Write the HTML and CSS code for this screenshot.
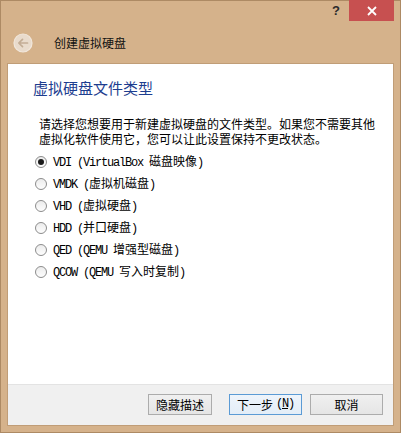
FILE: index.html
```html
<!DOCTYPE html>
<html lang="zh-CN">
<head>
<meta charset="utf-8">
<title>创建虚拟硬盘</title>
<link rel="stylesheet" href="styles.css">
</head>
<body>
<div class="window">
  <div class="titlebar">
    <div class="help">?</div>
    <div class="close">
      <svg width="10" height="10" viewBox="0 0 10 10"><path d="M1 1 L9 9 M9 1 L1 9" stroke="#fff" stroke-width="1.8" fill="none"/></svg>
    </div>
  </div>
  <div class="nav">
    <svg class="back" width="20" height="20" viewBox="0 0 20 20">
      <circle cx="10" cy="10" r="9" fill="#e9dbcc" stroke="#f1e7dc" stroke-width="1.2"/>
      <path d="M14.5 10 H6 M9.5 6.3 L5.8 10 L9.5 13.7" stroke="#c3ad95" stroke-width="1.7" fill="none" stroke-linecap="round" stroke-linejoin="round"/>
    </svg>
    <span class="nav-title">创建虚拟硬盘</span>
  </div>
  <div class="client">
    <div class="page">
      <h1 class="heading">虚拟硬盘文件类型</h1>
      <p class="desc">请选择您想要用于新建虚拟硬盘的文件类型。如果您不需要其他<br>虚拟化软件使用它，您可以让此设置保持不更改状态。</p>
      <div class="options">
        <div class="option"><span class="radio checked"></span><span class="label"><span class="mono">VDI (VirtualBox </span>磁盘映像<span class="mono">)</span></span></div>
        <div class="option"><span class="radio"></span><span class="label"><span class="mono">VMDK (</span>虚拟机磁盘<span class="mono">)</span></span></div>
        <div class="option"><span class="radio"></span><span class="label"><span class="mono">VHD (</span>虚拟硬盘<span class="mono">)</span></span></div>
        <div class="option"><span class="radio"></span><span class="label"><span class="mono">HDD (</span>并口硬盘<span class="mono">)</span></span></div>
        <div class="option"><span class="radio"></span><span class="label"><span class="mono">QED (QEMU </span>增强型磁盘<span class="mono">)</span></span></div>
        <div class="option"><span class="radio"></span><span class="label"><span class="mono">QCOW (QEMU </span>写入时复制<span class="mono">)</span></span></div>
      </div>
    </div>
    <div class="footer">
      <button class="btn btn-hide">隐藏描述</button>
      <button class="btn btn-next focused">下一步<span class="mono">(<u>N</u>)</span></button>
      <button class="btn btn-cancel">取消</button>
    </div>
  </div>
</div>
</body>
</html>
```

FILE: styles.css
```css
html, body {
  margin: 0;
  padding: 0;
}
body {
  font-family: "Noto Sans CJK SC", "Noto Sans", sans-serif;
  font-size: 12px;
  color: #000;
  background: #d5b28b;
}
.window {
  width: 401px;
  height: 433px;
  box-sizing: border-box;
  border: 1px solid #ad8a64;
  background: #d5b28b;
  display: flex;
  flex-direction: column;
}
.titlebar {
  height: 20px;
  display: flex;
  justify-content: flex-end;
  align-items: stretch;
  padding-right: 6px;
  margin-top: -1px;
}
.help {
  width: 26px;
  display: flex;
  align-items: center;
  justify-content: center;
  font-family: "Liberation Sans", sans-serif;
  font-weight: bold;
  font-size: 13px;
  color: #2b2b2b;
  padding-top: 1px;
}
.close {
  width: 45px;
  height: 21px;
  background: #c75050;
  display: flex;
  align-items: center;
  justify-content: center;
}
.nav {
  height: 43px;
  display: flex;
  align-items: center;
  padding-left: 12px;
  box-sizing: border-box;
  padding-top: 2px;
}
.back {
  display: block;
  flex: none;
}
.nav-title {
  margin-left: 21px;
  font-size: 12px;
  color: #111;
  line-height: 16px;
}
.client {
  margin: 0 6px 6px 6px;
  border: 1px solid #c09d77;
  flex: 1;
  display: flex;
  flex-direction: column;
  background: #fff;
}
.page {
  flex: 1;
  padding-top: 14px;
}
.heading {
  margin: 0;
  padding-left: 25px;
  font-size: 15px;
  font-weight: normal;
  line-height: 19px;
  color: #1d3d8f;
}
.desc {
  margin: 19px 0 0 0;
  padding-left: 31px;
  line-height: 15px;
  font-size: 12px;
  white-space: nowrap;
}
.options {
  margin-top: 5px;
  padding-left: 27px;
  display: flex;
  flex-direction: column;
}
.option {
  height: 22px;
  display: flex;
  align-items: center;
}
.radio {
  width: 12px;
  height: 12px;
  box-sizing: border-box;
  border: 1px solid #8c8c8c;
  border-radius: 50%;
  background: linear-gradient(#ececec, #fdfdfd);
  margin-right: 6px;
  flex: none;
  display: flex;
  align-items: center;
  justify-content: center;
}
.radio.checked::after {
  content: "";
  width: 6px;
  height: 6px;
  border-radius: 50%;
  background: #1a1a1a;
}
.label {
  line-height: 16px;
  white-space: nowrap;
}
.mono {
  font-family: "Liberation Mono", monospace;
  font-size: 12px;
  letter-spacing: -1.2px;
}
.footer {
  height: 41px;
  box-sizing: border-box;
  background: #f0f0f0;
  border-top: 1px solid #e3e3e3;
  display: flex;
  justify-content: flex-end;
  align-items: flex-start;
  padding: 9px 10px 0 0;
}
.btn {
  height: 21px;
  box-sizing: border-box;
  border: 1px solid #acacac;
  background: linear-gradient(#f0f0f0, #e5e5e5);
  font-family: "Noto Sans CJK SC", sans-serif;
  font-size: 12px;
  color: #000;
  padding: 0;
  line-height: 17px;
  display: flex;
  align-items: center;
  justify-content: center;
}
.btn-hide {
  width: 64px;
  margin-right: 17px;
}
.btn-next {
  width: 73px;
  margin-right: 8px;
}
.btn-cancel {
  width: 73px;
}
.btn.focused {
  border-color: #5b9bd5;
  background: linear-gradient(#eef4fb, #e3edf7);
}
.btn .mono {
  margin-left: 3px;
}
```
